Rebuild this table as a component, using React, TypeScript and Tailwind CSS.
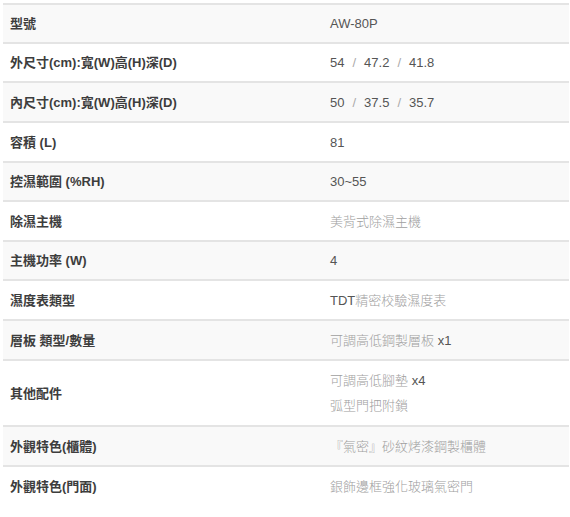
const font = {
  fontFamily: '"Liberation Sans", Arial, "Noto Sans CJK TC", sans-serif',
}

type Row = {
  label: string
  value: React.ReactNode
  h: string
  shade?: boolean
}

function Soft({ children }: { children: React.ReactNode }) {
  return <span className="font-light text-[#a0a0a0]">{children}</span>
}

function Dims({ parts }: { parts: string[] }) {
  return (
    <span>
      {parts.map((p, i) => (
        <span key={i}>
          {i > 0 && <span className="mx-[8px] text-[#aaa]">/</span>}
          {p}
        </span>
      ))}
    </span>
  )
}

const rows: Row[] = [
  { label: "型號", value: "AW-80P", h: "h-[39px]", shade: true },
  { label: "外尺寸(cm):寬(W)高(H)深(D)", value: <Dims parts={["54", "47.2", "41.8"]} />, h: "h-[39px]" },
  { label: "內尺寸(cm):寬(W)高(H)深(D)", value: <Dims parts={["50", "37.5", "35.7"]} />, h: "h-[40px]", shade: true },
  { label: "容積 (L)", value: "81", h: "h-[40px]" },
  { label: "控濕範圍 (%RH)", value: "30~55", h: "h-[39px]", shade: true },
  { label: "除濕主機", value: <Soft>美背式除濕主機</Soft>, h: "h-[40px]" },
  { label: "主機功率 (W)", value: "4", h: "h-[39px]", shade: true },
  { label: "濕度表類型", value: <>TDT<Soft>精密校驗濕度表</Soft></>, h: "h-[40px]" },
  { label: "層板 類型/數量", value: <><Soft>可調高低鋼製層板</Soft> x1</>, h: "h-[40px]", shade: true },
  {
    label: "其他配件",
    value: (
      <div className="flex flex-col gap-[10px]">
        <div><Soft>可調高低腳墊</Soft> x4</div>
        <div><Soft>弧型門把附鎖</Soft></div>
      </div>
    ),
    h: "h-[66px]",
  },
  { label: "外觀特色(櫃體)", value: <Soft>『氣密』砂紋烤漆鋼製櫃體</Soft>, h: "h-[40px]", shade: true },
  { label: "外觀特色(門面)", value: <Soft>銀飾邊框強化玻璃氣密門</Soft>, h: "h-[40px]" },
]

export default function App() {
  return (
    <div className="w-[570px] h-[517px] bg-white pt-[3px] pl-[3px] pr-[1px]" style={font}>
      <div className="flex flex-col text-[13px] leading-[15px]">
        {rows.map((r, i) => (
          <div
            key={i}
            className={`flex items-center border-t-2 border-[#e4e4e4] ${r.h} ${r.shade ? "bg-[#f9f9f9]" : "bg-white"}`}
          >
            <div className="w-[320px] pl-[7px] font-semibold text-[#3d3d3d]">{r.label}</div>
            <div className="pl-[7px] text-[#555]">{r.value}</div>
          </div>
        ))}
      </div>
    </div>
  )
}
